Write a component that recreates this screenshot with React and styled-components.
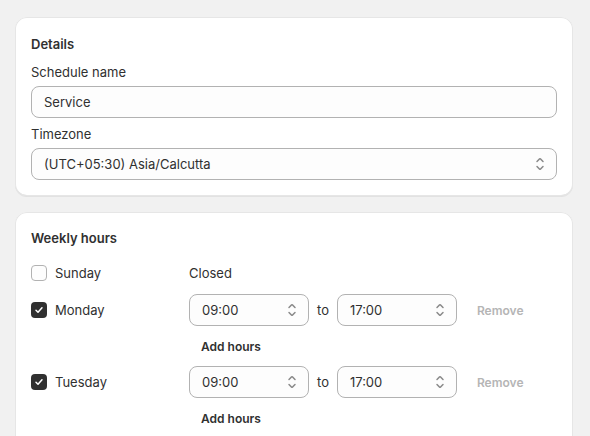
import React from "react";
import styled, { createGlobalStyle } from "styled-components";

const GlobalStyle = createGlobalStyle`
  body {
    margin: 0;
    background: #f1f1f1;
    font-family: Inter, "Noto Sans", sans-serif;
    font-size: 13px;
    line-height: 20px;
    color: #303030;
  }
`;

const Page = styled.div`
  display: flex;
  flex-direction: column;
  gap: 16px;
  width: 558px;
  padding: 17px 0 0 15px;
`;

const Card = styled.section`
  display: flex;
  flex-direction: column;
  gap: ${({ gap }) => gap || 6}px;
  background: #ffffff;
  border-radius: 12px;
  padding: ${({ top }) => top || 16}px 16px 16px;
  box-shadow: 0 1px 0 0 rgba(26, 26, 26, 0.07), inset 0 0 0 1px #e6e6e6,
    inset 0 -1px 0 0 #d6d6d6;
`;

const CardTitle = styled.h2`
  margin: 0 0 ${({ after }) => after ?? 2}px;
  font-size: 13px;
  line-height: 20px;
  font-weight: 600;
  color: #303030;
`;

const Field = styled.div`
  display: flex;
  flex-direction: column;
  gap: 4px;
`;

const Label = styled.label`
  font-size: 13px;
  line-height: 20px;
  color: #303030;
`;

const Box = styled.div`
  display: flex;
  align-items: center;
  justify-content: space-between;
  box-sizing: border-box;
  width: ${({ w }) => (w ? `${w}px` : "100%")};
  height: 32px;
  padding: 0 6px 0 12px;
  background: #fdfdfd;
  border: 1px solid #b2b2b2;
  border-radius: 8px;
  font-size: 13px;
  color: #303030;
  flex-shrink: 0;
`;

const TextInput = styled.input`
  flex: 1;
  border: none;
  outline: none;
  background: transparent;
  padding: 0;
  font: inherit;
  color: inherit;
`;

const DayList = styled.div`
  display: flex;
  flex-direction: column;
  gap: 5px;
`;

const DayBlock = styled.div`
  display: flex;
  flex-direction: column;
`;

const Row = styled.div`
  display: flex;
  align-items: center;
  min-height: 32px;
`;

const DayCell = styled.label`
  display: flex;
  align-items: center;
  gap: 8px;
  width: 158px;
  flex-shrink: 0;
`;

const CheckBox = styled.span`
  display: flex;
  align-items: center;
  justify-content: center;
  box-sizing: border-box;
  width: 16px;
  height: 16px;
  border-radius: 4px;
  background: ${({ checked }) => (checked ? "#303030" : "#fdfdfd")};
  border: ${({ checked }) => (checked ? "none" : "1px solid #b2b2b2")};
`;

const Hours = styled.div`
  display: flex;
  align-items: center;
  gap: 8px;
`;

const Closed = styled.span`
  color: #303030;
`;

const PlainButton = styled.button`
  border: none;
  background: none;
  font-family: inherit;
  font-size: 12px;
  font-weight: 600;
  padding: 0 12px;
  height: ${({ h }) => h || 32}px;
  color: ${({ muted }) => (muted ? "#b5b5b5" : "#303030")};
  cursor: pointer;
`;

const AddRow = styled.div`
  display: flex;
  padding-left: 158px;
  margin: 10px 0 5px;
`;

const SelectIcon = () => (
  <svg width="20" height="20" viewBox="0 0 20 20" fill="#8a8a8a">
    <path d="M10.884 4.323a1.25 1.25 0 0 0-1.768 0l-2.646 2.647a.75.75 0 0 0 1.06 1.06l2.47-2.47 2.47 2.47a.75.75 0 1 0 1.06-1.06l-2.646-2.647Z" />
    <path d="m13.53 13.03-2.646 2.647a1.25 1.25 0 0 1-1.768 0l-2.646-2.647a.75.75 0 0 1 1.06-1.06l2.47 2.47 2.47-2.47a.75.75 0 0 1 1.06 1.06Z" />
  </svg>
);

const Check = () => (
  <svg width="12" height="12" viewBox="0 0 12 12" fill="none">
    <path
      d="M3 6.3l2 2 4-4.6"
      stroke="#fff"
      strokeWidth="1.5"
      strokeLinecap="round"
      strokeLinejoin="round"
    />
  </svg>
);

const days = [
  { name: "Sunday", open: false },
  { name: "Monday", open: true, from: "09:00", to: "17:00" },
  { name: "Tuesday", open: true, from: "09:00", to: "17:00" },
];

const TimeSelect = ({ value }) => (
  <Box w={120}>
    <span>{value}</span>
    <SelectIcon />
  </Box>
);

export default function App() {
  return (
    <>
      <GlobalStyle />
      <Page>
        <Card top={17}>
          <CardTitle>Details</CardTitle>
          <Field>
            <Label>Schedule name</Label>
            <Box>
              <TextInput defaultValue="Service" />
            </Box>
          </Field>
          <Field>
            <Label>Timezone</Label>
            <Box>
              <span>(UTC+05:30) Asia/Calcutta</span>
              <SelectIcon />
            </Box>
          </Field>
        </Card>

        <Card gap={8}>
          <CardTitle after={1}>Weekly hours</CardTitle>
          <DayList>
            {days.map((d) => (
              <DayBlock key={d.name}>
                <Row>
                  <DayCell>
                    <CheckBox checked={d.open}>{d.open && <Check />}</CheckBox>
                    {d.name}
                  </DayCell>
                  {d.open ? (
                    <Hours>
                      <TimeSelect value={d.from} />
                      <span>to</span>
                      <TimeSelect value={d.to} />
                      <PlainButton muted>Remove</PlainButton>
                    </Hours>
                  ) : (
                    <Closed>Closed</Closed>
                  )}
                </Row>
                {d.open && (
                  <AddRow>
                    <PlainButton h={20}>Add hours</PlainButton>
                  </AddRow>
                )}
              </DayBlock>
            ))}
          </DayList>
        </Card>
      </Page>
    </>
  );
}
